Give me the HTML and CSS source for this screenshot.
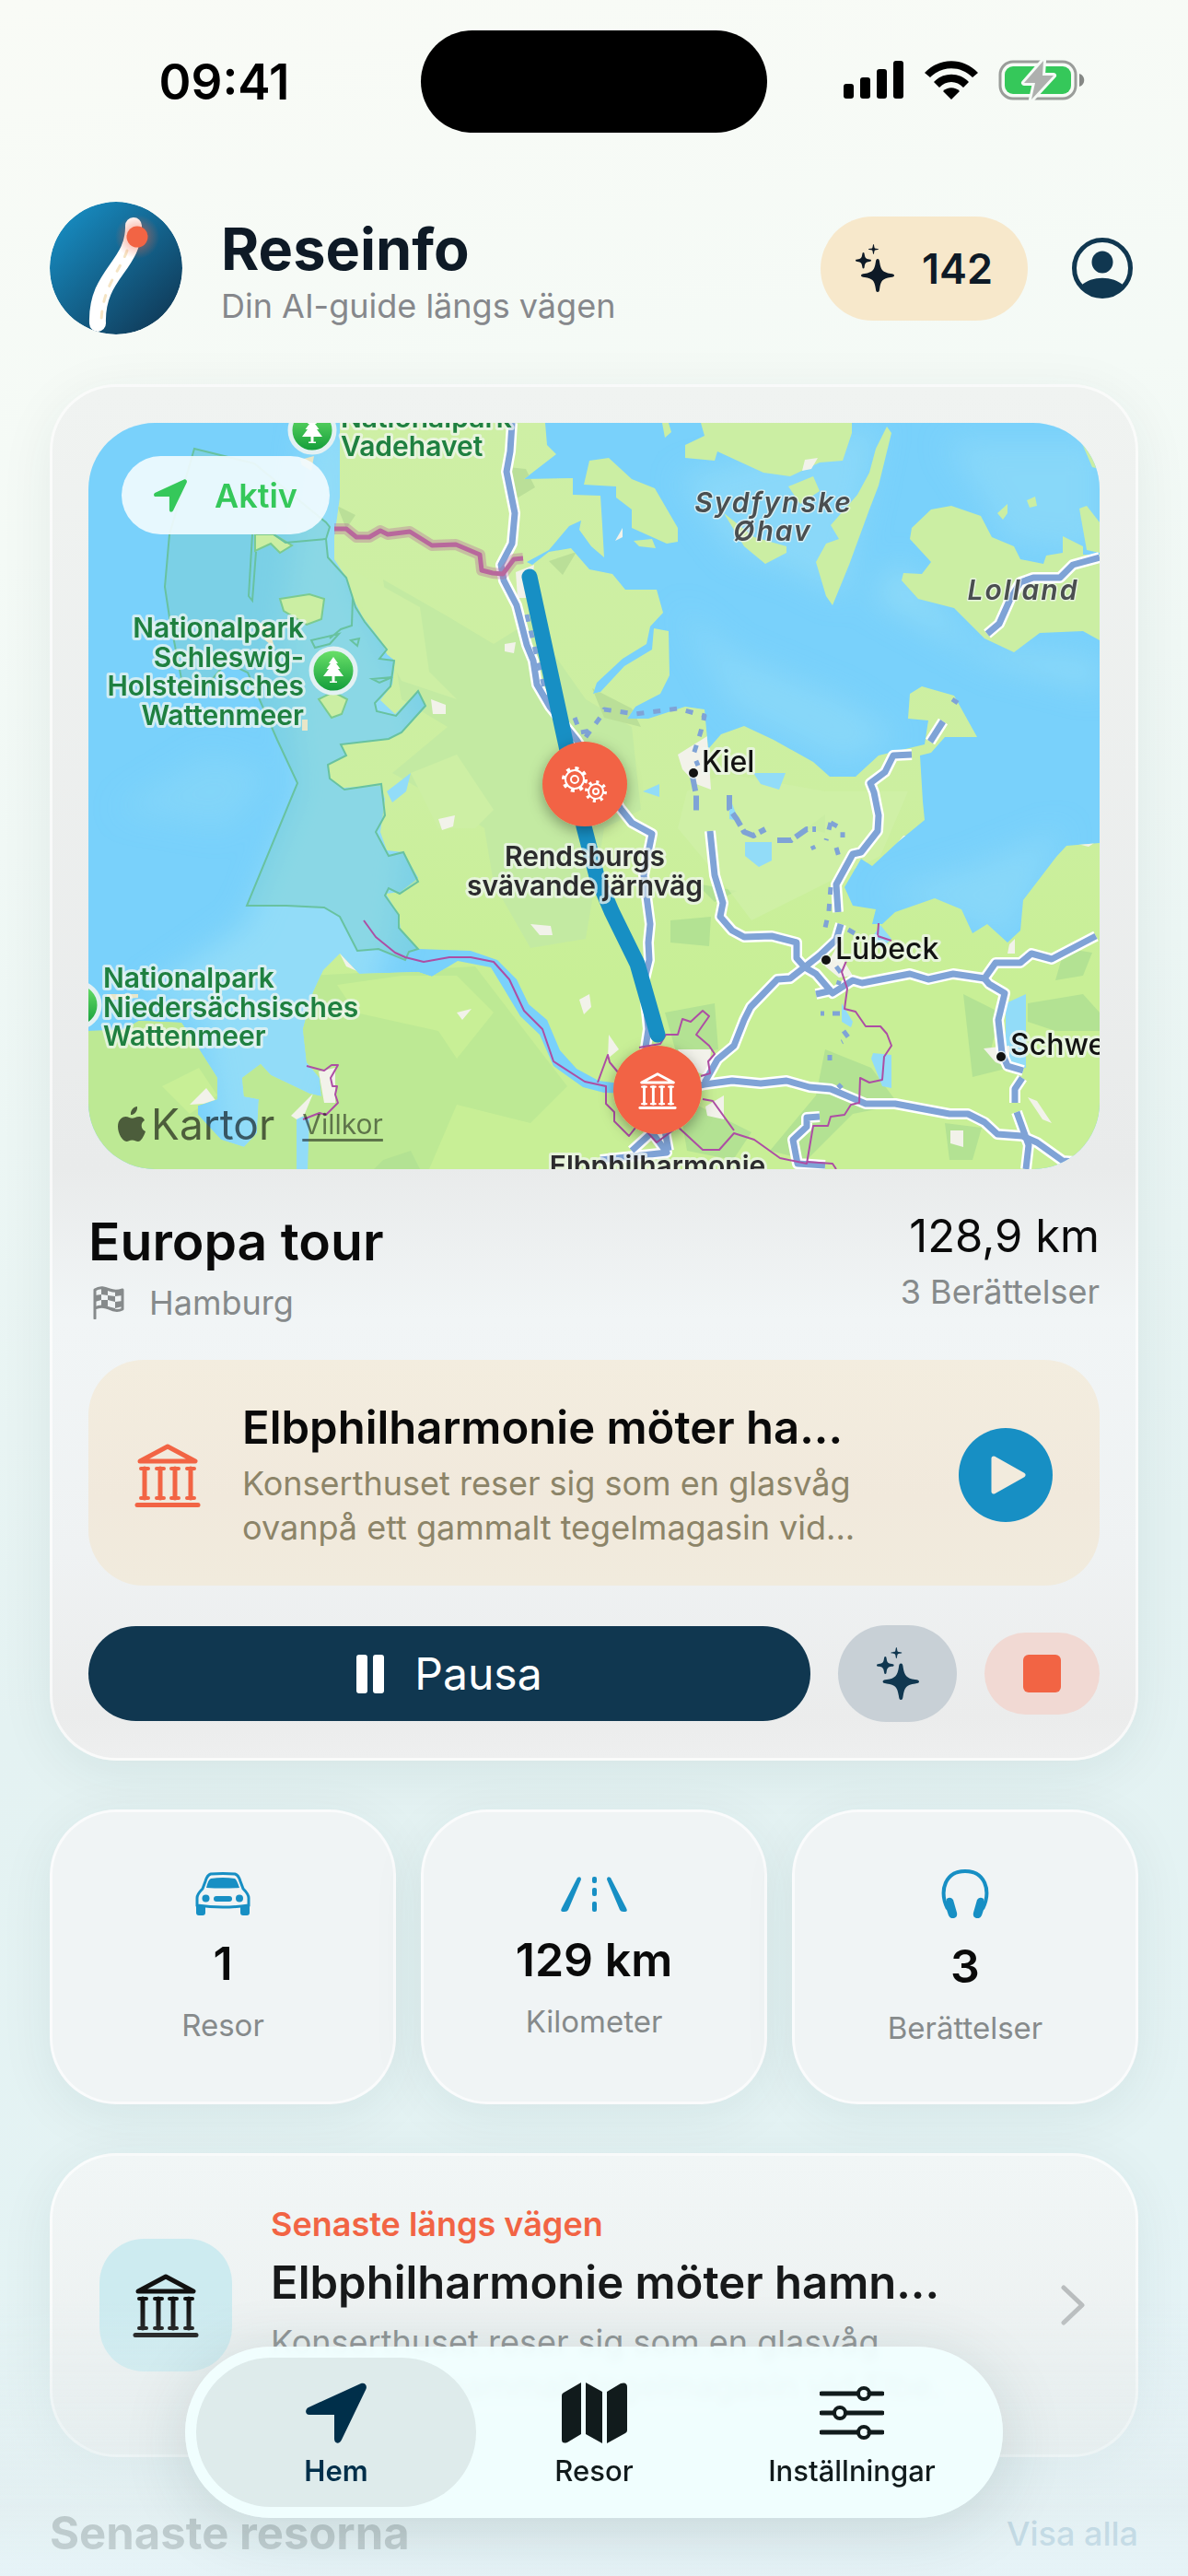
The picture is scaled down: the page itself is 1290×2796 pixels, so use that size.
FILE: index.html
```html
<!DOCTYPE html>
<html lang="sv">

	<head>
		<meta charset="UTF-8">
		<meta name="viewport" content="width=device-width, initial-scale=1">
		<title>Reseinfo</title>
		<link rel="stylesheet" href="styles.css">
	</head>

	<body>
		<!-- shared icons -->
		<svg class="sprite" width="0" height="0" aria-hidden="true">
			<symbol id="i-bank" viewBox="0 0 72 69">
				<path d="M36 3 L66 19 H6 Z" fill="none" stroke="currentColor" stroke-width="5" stroke-linejoin="round" />
				<g stroke="currentColor" stroke-linecap="round">
					<path d="M11 27V59M28 27V59M44 27V59M61 27V59" stroke-width="5" />
					<path d="M7 27h8M24 27h8M40 27h8M57 27h8M7 59h8M24 59h8M40 59h8M57 59h8" stroke-width="4" />
					<path d="M3 66.500H69" stroke-width="5" />
				</g>
			</symbol>
			<symbol id="i-sparkle" viewBox="0 0 42 52">
				<path d="M24 16c1.500 0 1.800 1 2.200 4 1.300 8 3.300 10.500 11.800 12 3 .4 4 .9 4 2s-1 1.600-4 2c-8.500 1.300-10.500 3.500-11.800 12-.4 3-.7 4-2.200 4s-1.800-1-2.200-4c-1.300-8.500-3.300-10.700-11.800-12-3-.4-4-.9-4-2s1-1.600 4-2c8.500-1.500 10.500-4 11.800-12 .4-3 .7-4 2.200-4z" />
				<path d="M8.500 9c.9 0 1 .7 1.200 2 .6 4 1.300 4.900 5.300 5.500 1.300.2 2 .4 2 1.200s-.7 1-2 1.200c-4 .6-4.700 1.600-5.300 5.500-.2 1.300-.3 2-1.200 2s-1-.7-1.200-2c-.6-3.900-1.300-4.900-5.300-5.500-1.300-.2-2-.4-2-1.200s.7-1 2-1.200c4-.6 4.700-1.500 5.300-5.500.2-1.300.3-2 1.200-2z" />
				<path d="M19.500 0c.7 0 .7 3.500 1.300 4.200.6.700 4.200.6 4.200 1.300s-3.600.6-4.200 1.300c-.6.700-.6 4.200-1.300 4.200s-.7-3.500-1.300-4.200c-.6-.7-4.200-.6-4.200-1.300s3.600-.6 4.200-1.300c.6-.7.6-4.200 1.300-4.200z" />
			</symbol>
			<symbol id="i-arrow" viewBox="0 0 66 66">
				<path d="M60 1c4-1.500 7 2 5.500 6L39 62c-2 5-8 5-8-1V35H4c-5 0-5-6-1-8z" />
			</symbol>
			<symbol id="i-tree" viewBox="0 0 22 28">
				<path d="M11 0l5 7h-2l4.500 6H16l6 8h-9.500v5.500H15V28H7v-1.500h2.500V21H0l6-8H3.500L8 7H6z" />
			</symbol>
		</svg>

		<div class="statusbar">
			<div class="time">09:41</div>
			<div class="island"></div>
			<div class="status-icons">
				<svg width="66" height="42" viewBox="0 0 66 42">
					<rect x="0" y="25" width="11" height="16" rx="3" />
					<rect x="18" y="18" width="11" height="23" rx="3" />
					<rect x="36" y="9" width="11" height="32" rx="3" />
					<rect x="54" y="0" width="11" height="41" rx="3" />
				</svg>
				<svg width="58" height="42" viewBox="0 0 58 42">
					<path d="M0 13C16-4 42-4 58 13L52 18C39 5 19 5 6 18z" />
					<path d="M10 23C20 12 38 12 48 23L42 29C35 21 23 21 16 29z" />
					<path d="M20 33C25 28 33 28 38 33L29 42z" />
				</svg>
				<svg width="94" height="46" viewBox="0 0 94 46">
					<rect x="2" y="3" width="82" height="40" rx="14" fill="none" stroke="#9a9d9a" stroke-width="3" />
					<rect x="7" y="8" width="72" height="30" rx="9" fill="#35c85a" />
					<path d="M88 16c7 2 7 12 0 14z" fill="#858885" />
					<path d="M49 2L28 26h12l-4 18 24-26H48z" fill="#aeb0ae" stroke="#f5faf6" stroke-width="6" stroke-linejoin="round" paint-order="stroke" />
				</svg>
			</div>
		</div>

		<header class="header">
			<svg class="logo" viewBox="0 0 144 144">
				<defs>
					<linearGradient id="logoBg" x1="0.1" y1="0.1" x2="0.85" y2="0.9">
						<stop offset="0" stop-color="#178bc0" />
						<stop offset="1" stop-color="#103d5c" />
					</linearGradient>
					<radialGradient id="glow">
						<stop offset="0.3" stop-color="#f26444" stop-opacity="0.45" />
						<stop offset="1" stop-color="#f26444" stop-opacity="0" />
					</radialGradient>
				</defs>
				<circle cx="72" cy="72" r="72" fill="url(#logoBg)" />
				<path d="M91 26C92 70 50 78 52 132" fill="none" stroke="#fff" stroke-width="18" stroke-linecap="round" />
				<path d="M84 53C76 76 57 92 56 130" fill="none" stroke="#f5e4c4" stroke-width="3" stroke-linecap="round" stroke-dasharray="7 11" />
				<circle cx="95" cy="38" r="24" fill="url(#glow)" />
				<circle cx="95" cy="38" r="11.500" fill="#f26444" />
			</svg>
			<div class="brand">
				<h1>Reseinfo</h1>
				<p>Din AI-guide längs vägen</p>
			</div>
			<button class="credits" type="button">
				<svg width="42" height="52"><use href="#i-sparkle" /></svg>
				142
			</button>
			<button class="profile" type="button" aria-label="Profil">
				<svg viewBox="0 0 66 66">
					<circle cx="33" cy="33" r="30.500" fill="none" stroke="#103750" stroke-width="5" />
					<ellipse cx="33" cy="26.500" rx="11.500" ry="12" />
					<path d="M10 52C21 41 45 41 56 52C44 69 22 69 10 52z" />
				</svg>
			</button>
		</header>

		<main class="content">
			<section class="card tour">
				<div class="map">
					<svg class="map-canvas" viewBox="0 0 1098 810" preserveAspectRatio="xMidYMid slice">
						<defs>
							<filter id="soft" x="-30%" y="-30%" width="160%" height="160%"><feGaussianBlur stdDeviation="16" /></filter>
							<filter id="pinShadow" x="-40%" y="-40%" width="180%" height="180%"><feDropShadow dx="0" dy="5" stdDeviation="8" flood-opacity="0.35" /></filter>
							<linearGradient id="land" x1="0" y1="0" x2="0" y2="1">
								<stop offset="0" stop-color="#ceefa5" />
								<stop offset="0.5" stop-color="#ccefa0" />
								<stop offset="0.75" stop-color="#c8ef96" />
							</linearGradient>
							<linearGradient id="park" x1="0" y1="0" x2="0" y2="1">
								<stop offset="0" stop-color="#6ee36b" />
								<stop offset="1" stop-color="#0f9a38" />
							</linearGradient>
							<clipPath id="mainClip"><use href="#mainland" /></clipPath>
						</defs>

						<!-- sea -->
						<rect width="1098" height="810" fill="#79d1fb" />
						<g fill="#92dcf8" filter="url(#soft)">
							<path d="M240 0H290V180L360 330L330 560L240 810H150L120 640L60 620L170 545L230 400L210 230z" />
							<path d="M640 60L860 0L820 190L760 160L700 140z" opacity=".7" />
							<path d="M880 150L960 240L1098 260V290L980 260L850 190z" opacity=".8" />
							<path d="M640 200L700 310L820 370L880 340L820 300L700 250z" opacity=".6" />
							<path d="M930 20H1098V140L1000 130z" opacity=".6" />
							<path d="M860 510L1000 560L1060 440L960 480z" opacity=".6" />
							<path d="M30 420L130 360L200 380L150 440z" opacity=".4" />
						</g>

						<!-- land -->
						<path id="mainland" fill="url(#land)" d="M273 0L273 81L267 124L267 148L280 168L289 194L298 211L319 238L324 251L333 258L330 284L317 301L333 316L358 291L367 308L340 336L326 343L274 349L280 361L260 371L262 386L276 396L317 394L322 408L317 444L324 464L342 466L358 494L339 509L323 511L337 534L339 551L358 571L415 573L444 583L465 604L478 631L498 648L512 681L530 701L554 714L600 720L600 728L560 727L537 721L505 698L490 664L469 644L451 614L437 591L401 584L373 601L358 596L294 598L273 576L255 594L244 618L233 658L237 694L251 711L253 731L240 728L198 708L187 696L167 711L169 731L185 734L183 771L169 786L144 778L119 751L119 741L140 734L140 711L119 678L101 651L55 649L37 659L0 660V810H1098V456L1062 459L1051 471L1015 518L1012 551L998 564L976 544L960 554L948 528L919 516L876 531L862 544L851 544L855 528L830 524L821 504L839 473L851 481L880 454L908 431L906 411L903 361L915 358L930 341L965 341L940 296L905 286L892 294L890 321L912 323L908 349L887 354L858 361L833 384L805 384L787 368L744 344L712 329L687 338L673 354L669 311L648 308L608 321L585 321L594 308L621 294L631 274L630 226L614 223L612 246L582 264L556 292L548 294L552 282L580 256L606 240L610 221L624 206L617 181L583 181L569 164L544 159L524 136L500 140L482 154L476 151L500 138L522 112L535 106L533 116L546 134L560 146L558 111L556 79L526 78L526 60L473 61L508 34L498 24L496 0z" />
						<g fill="#cbeea3">
							<path d="M544 41L565 38L590 61L615 71L640 114L640 129L628 131L590 114L590 94L573 81L573 69L538 67z" />
							<path d="M665 0L669 14L648 24V38L680 41L683 31L733 54L762 58L794 43L819 41L829 11V0z" />
							<path d="M867 4L872 11L858 68L848 94L826 154L808 198L801 188L790 151L801 131L815 126L806 111L835 78L848 54L855 28z" />
							<path d="M690 98L723 124L758 134V141L735 153L712 134z" />
							<path d="M760 69L787 58L794 74L773 88z" />
							<path d="M894 114L915 94L937 90L969 101L981 124L1005 134L1012 148L1037 153L1040 144L1058 141V123L1080 134V143H1098V236L1080 226L1033 228L1005 249L973 234L940 201L901 191L883 171L885 163L905 164L915 151L892 126z" />
							<path d="M1076 93L1084 90L1098 108V141L1084 138z" />
							<path d="M1078 20L1098 38V50L1090 48zM1019 84L1028 80L1030 90L1022 92zM987 98L998 88V98L993 105zM623 0H630L633 10L626 16z" />
							<path d="M592 128L612 126L616 136L598 134z" />
						</g>

						<!-- woods and fields -->
						<g clip-path="url(#mainClip)">
							<path fill="#bde994" d="M0 640L240 600L420 590L520 720L480 760L400 740L370 810H0z" />
							<path fill="#c8ef96" d="M80 720L120 700L140 730L110 750zM270 610L340 600L400 600L440 640L400 690L380 660L290 640z" />
							<path fill="#c3eaa2" d="M320 170L390 210L440 240L480 215L540 300L590 330L600 420L560 440L540 560L480 570L440 500L430 440L400 420L330 380L390 330L340 300L330 240z" />
							<path fill="#cdefa4" d="M270 150L360 200L370 270L400 300L340 280zM350 380L400 360L440 420L420 440L380 440z" />
							<path fill="#b3e293" d="M632 540L676 536L674 568L632 564zM626 640L680 630L684 680L640 690zM640 730L720 770L700 800L650 790zM800 680L850 700L880 740L830 750L780 800L740 790L790 730zM950 620L990 640L980 680L1000 700L960 710zM1020 630L1080 620L1098 640V660L1050 660L1020 650zM1060 570L1090 575L1080 600L1050 605zM660 500L704 508L680 520zM780 440L800 425L800 445zM930 760L970 765L960 800H935zM508 680L530 700L520 690zM320 800L350 790L360 810H310z" />
							<path fill="#badf98" d="M455 48L475 50L485 70L465 82zM270 90L290 100L280 115zM500 150L530 140L515 165zM547 288L590 310L600 330L560 320z" />
							<path fill="#d0f0a8" d="M690 380L800 400L890 400L860 470L800 500L720 540L690 500L640 440L650 400z" opacity=".8" />
							<path fill="#92dcf8" d="M713 455H742V475L728 482L713 470zM722 380H757L750 398L730 392zM852 684L872 686L872 722L862 720L850 690zM996 630L1018 620V700H996V660zM602 400L620 392L620 406zM818 630L830 650L828 656L818 650zM226 751L240 755L238 810H226zM324 400L350 380L345 400L330 412zM696 405L706 432L696 430zM860 545L872 560L862 570L850 560z" />
							<path fill="#f2f2ea" d="M640 360L672 340L676 398L660 392L645 376zM594 308H606L590 321zM464 162L484 154L480 190H466zM452 240L464 238L462 250L452 248zM372 300L388 306V316H374zM380 430L398 426L396 438L384 442zM480 544L502 546L504 556L490 556zM533 626L544 620L546 634L538 642zM400 640L416 636L406 648zM273 576L290 582L294 596L280 590zM110 740L128 722L140 738zM250 704L268 700L268 738H256zM220 752L244 728L234 752L226 756zM800 590L812 570L830 600L815 602zM640 680L676 680L674 710L650 700zM565 664L576 680L564 690zM670 742L690 730L690 756L672 752zM936 768H950V786L936 782zM1000 566L1006 560V576H998zM972 679L1000 676V700L985 694zM1020 732L1030 736L1046 760L1036 756zM1070 456H1092L1086 460zM875 460L885 448L900 448L876 464z" />
							<path fill="#c8ef96" d="M986 530L1000 516L1014 512L1006 540L990 536z" />
						</g>
						<path fill="#f2f2ea" d="M778 40L792 38L785 50L775 52zM572 128L580 114V124z" />

						<!-- national park -->
						<path fill="#7ecfc4" fill-opacity=".38" stroke="#68c2a0" stroke-width="2" d="M115 28L180 44L258 108L262 113L258 126L260 146L280 168L287 190L290 200L300 216L324 246L316 256L332 258L328 286L311 304L313 313L334 318L358 291L366 307L340 336L326 343L274 349L280 361L260 371L262 386L278 398L318 392L322 426L312 444L326 470L342 466L358 498L338 511L326 505L322 513L337 534V548L358 571L348 574L344 583L315 571L292 573L273 536L256 526L215 524H172L227 391L205 344L173 271L150 260L126 288L101 278L88 211L83 178L88 121z" />
						<g fill="#cbeea3" stroke="#7ccb8f" stroke-width="2">
							<path d="M208 191L240 186L256 191L253 213L237 219L212 204z" />
							<path d="M181 121H201L221 133L208 141L198 131L181 139z" />
							<path d="M250 300L266 292L281 300L275 316L264 320z" />
						</g>
						<path fill="none" stroke="#68c2a0" stroke-width="2" d="M178 121L174 188L178 193L182 140M201 121L214 130L258 126M242 236L272 229L262 240L246 244zM287 190L286 220L274 224L262 234M308 278L330 276L316 282zM285 236L294 234L292 242z" />
						<path fill="#e9e6c8" d="M184 216L196 222L202 244L192 236zM230 40L245 36L242 52L232 46zM232 322H238V334H232zM20 620H54V624L20 627z" />

						<!-- roads -->
						<g fill="none" stroke-linejoin="round">
							<g stroke="#fff" stroke-width="12">
								<path d="M460 0L458 31L454 53L463 98L460 131L448 154L451 171L465 198L476 241L483 258L487 284L501 308L530 344L578 419L590 434L612 446L603 491L610 544L608 564L609 583L603 608L608 658L605 678L618 724L630 790" />
								<path d="M675 443L680 491L689 521L686 536L699 551L712 558L742 557L769 564V581L778 591L790 598L808 619L830 605L840 608L892 598L912 604L939 598L973 603L985 586H1012L1024 576L1046 582L1094 557" />
								<path d="M669 716L683 691L701 676L712 648L719 634L748 604L762 603L794 578L812 561L817 544M790 620L808 616M814 531L812 501L830 468L839 466L857 443L858 426L853 401L849 391L865 379L874 361L894 360M914 346L928 324" />
								<path d="M640 724L669 718L699 714L730 717L758 714L783 721L806 723L844 739L876 739L935 750H955L973 759L987 772L1014 774L1030 781L1058 801L1072 802" />
								<path d="M973 603L978 609L995 619L988 648L992 684L998 698L1015 703M1014 711L1006 723V738M1008 748L1021 784L1018 810" />
								<path d="M976 229L989 218L1001 191L1012 173L1026 168H1055L1069 154L1098 146" />
								<path d="M794 753L780 754V764L765 778L770 804L800 806M590 790L612 770L628 792L556 800" />
							</g>
							<g stroke="#7fa3d6" stroke-width="7">
								<path d="M460 0L458 31L454 53L463 98L460 131L448 154L451 171L465 198L476 241L483 258L487 284L501 308L530 344L578 419L590 434L612 446L603 491L610 544L608 564L609 583L603 608L608 658L605 678L618 724L630 790" />
								<path d="M675 443L680 491L689 521L686 536L699 551L712 558L742 557L769 564V581L778 591L790 598L808 619L830 605L840 608L892 598L912 604L939 598L973 603L985 586H1012L1024 576L1046 582L1094 557" />
								<path d="M669 716L683 691L701 676L712 648L719 634L748 604L762 603L794 578L812 561L817 544M790 620L808 616M814 531L812 501L830 468L839 466L857 443L858 426L853 401L849 391L865 379L874 361L894 360M914 346L928 324" />
								<path d="M640 724L669 718L699 714L730 717L758 714L783 721L806 723L844 739L876 739L935 750H955L973 759L987 772L1014 774L1030 781L1058 801L1072 802" />
								<path d="M973 603L978 609L995 619L988 648L992 684L998 698L1015 703M1014 711L1006 723V738M1008 748L1021 784L1018 810" />
								<path d="M976 229L989 218L1001 191L1012 173L1026 168H1055L1069 154L1098 146" />
								<path d="M794 753L780 754V764L765 778L770 804L800 806M590 790L612 770L628 792L556 800" />
							</g>
							<g stroke="#7fa3d6" stroke-width="5" stroke-dasharray="8 10">
								<path d="M476 208L486 250L498 300M528 320L534 336L545 334M540 341L557 318L560 311L594 316L640 310L669 318L665 335L657 360L662 372" />
								<path d="M806 434L801 453M806 434L819 441V450M812 461L815 471M786 459L788 463M806 504L804 530L800 548M825 550L832 554M812 590L818 598L814 610M795 641H799M808 641H818M820 660L826 668L818 672M805 686V692M814 718L818 722M938 300L944 304" />
							</g>
							<path stroke="#7fa3d6" stroke-width="6" stroke-dasharray="16 5" d="M656 384L660 404V422M696 404V419L704 430L712 444L722 448L735 441M748 453H763L780 441L790 441" />
						</g>

						<!-- borders -->
						<g fill="none" stroke-linejoin="round">
							<path stroke="#b8689c" stroke-opacity=".35" stroke-width="12" d="M267 115H280L291 124H305L317 117L325 121L349 118L373 133L399 132L425 143L427 160L439 163L450 164L462 148L472 147" />
							<path stroke="#b8689c" stroke-width="5" d="M267 115H280L291 124H305L317 117L325 121L349 118L373 133L399 132L425 143L427 160L439 163L450 164L462 148L472 147" />
							<path stroke="#ad4ea4" stroke-width="2" d="M299 540L312 558L333 575L344 580L364 585L392 580H415L440 585L457 604L473 638L493 658L505 693L539 715L562 720V739L571 748V758L587 774L598 760L617 781L640 764L667 789H685L701 771L723 778L751 798L780 804L787 763H803L806 753L821 751L828 740L837 738L838 711L848 716L862 713L864 688L872 676L867 663L860 655H844L833 639L821 636L824 614L818 596L823 584" />
							<path stroke="#ad4ea4" stroke-width="2" d="M553 716L564 686L566 694L576 706M598 678L621 674L627 664H640L645 647L654 650L667 638L674 644L660 664L674 676L680 685L673 693L675 706L665 709M667 734L678 736L701 768M780 802L808 804L812 810M858 543L857 557L872 562M237 698L256 703L264 697H271L263 711L265 720H270L268 729L271 738L258 751L251 749L233 756" />
						</g>

						<!-- travelled route -->
						<path fill="none" stroke="#178fc4" stroke-width="17" stroke-linecap="round" stroke-linejoin="round" d="M479 167L521 360L538 438L552 492L568 530L596 587L618 664" />

						<!-- place names -->
						<g class="label label-park">
							<text x="274" y="5">Nationalpark</text>
							<text x="274" y="36">Vadehavet</text>
						</g>
						<g class="label label-park" text-anchor="end">
							<text x="234" y="233">Nationalpark</text>
							<text x="234" y="265">Schleswig-</text>
							<text x="234" y="296">Holsteinisches</text>
							<text x="234" y="328">Wattenmeer</text>
						</g>
						<g class="label label-park">
							<text x="16" y="613">Nationalpark</text>
							<text x="16" y="645">Niedersächsisches</text>
							<text x="16" y="676">Wattenmeer</text>
						</g>
						<g class="label label-region" text-anchor="middle">
							<text x="744" y="97">Sydfynske</text>
							<text x="743" y="128">Øhav</text>
							<text x="1015" y="192">Lolland</text>
						</g>
						<g class="label label-city">
							<circle cx="657" cy="380" r="5" />
							<text x="666" y="379">Kiel</text>
							<circle cx="801" cy="583" r="5" />
							<text x="811" y="582">Lübeck</text>
							<circle cx="991" cy="688" r="5" />
							<text x="1001" y="686">Schwerin</text>
						</g>
						<g class="label label-stop" text-anchor="middle">
							<text x="539" y="481">Rendsburgs</text>
							<text x="539" y="513">svävande järnväg</text>
							<text x="618" y="817">Elbphilharmonie</text>
						</g>

						<!-- park markers -->
						<g stroke="#e3f1f3" stroke-width="5" fill="url(#park)">
							<circle cx="243" cy="8" r="24" />
							<circle cx="266" cy="269" r="24" />
							<circle cx="-12" cy="632" r="24" />
						</g>
						<use href="#i-tree" x="232" y="-6" width="22" height="28" fill="#fff" />
						<use href="#i-tree" x="255" y="254" width="22" height="28" fill="#fff" />

						<!-- story pins -->
						<g filter="url(#pinShadow)" fill="#f26444">
							<circle cx="539" cy="392" r="46" />
							<circle cx="618" cy="724" r="48" />
						</g>
						<g fill="none" stroke="#fff">
							<circle cx="528" cy="387" r="10" stroke-width="2" />
							<circle cx="528" cy="387" r="4" stroke-width="2" />
							<circle cx="528" cy="387" r="12" stroke-width="4" stroke-dasharray="4 5.420" />
							<circle cx="551" cy="400" r="8" stroke-width="2" />
							<circle cx="551" cy="400" r="3" stroke-width="2" />
							<circle cx="551" cy="400" r="10" stroke-width="4" stroke-dasharray="3 4.850" />
						</g>
						<use href="#i-bank" x="597" y="705" width="42" height="40" color="#fff" />
					</svg>
					<span class="badge">
						<svg width="36" height="36"><use href="#i-arrow" /></svg>
						Aktiv
					</span>
					<div class="attribution">
						<svg width="30" height="39" viewBox="0 0 30 39">
							<path d="M21 0c.5 5-3 9-7 9-.5-5 3-8.500 7-9zM29 15c-5 3-4 10 1 12-2 6-5 11-8 11-2.500 0-3.500-1.500-6.500-1.500S11.500 38 9.500 38C5 38 0 29 0 22 0 15 4 11 8.500 11c3 0 5 1.800 7 1.800s4.500-2 8-1.800c2.500.1 4.500 1.500 5.500 4z" />
						</svg>
						<span>Kartor</span>
						<a href="#">Villkor</a>
					</div>
				</div>

				<div class="tour-info">
					<div>
						<h2>Europa tour</h2>
						<p class="muted destination">
							<svg width="34" height="36" viewBox="0 0 34 36">
								<path d="M2 35V4C8 0 13 2 18 4s8 2 14 0v21c-6 3-11 1-15-1S8 21 2 24" fill="none" stroke="currentColor" stroke-width="3" stroke-linecap="round" stroke-linejoin="round" />
								<path d="M9 2l7 2v6l-7-1zM24 5l8-1v6l-8 1zM2 10l7-1v6l-7 2zM16 10l8 1v6l-8-2zM9 15l7 0v7l-7-1zM24 17l8-1v6l-8 2zM16 22l8 2v3l-8-3z" fill="currentColor" />
							</svg>
							Hamburg
						</p>
					</div>
					<div class="tour-stats">
						<p class="distance">128,9 km</p>
						<p class="muted">3 Berättelser</p>
					</div>
				</div>

				<article class="story">
					<svg class="story-icon" width="72" height="69"><use href="#i-bank" /></svg>
					<div class="story-text">
						<h3>Elbphilharmonie möter ha...</h3>
						<p>Konserthuset reser sig som en glasvåg<br>ovanpå ett gammalt tegelmagasin vid...</p>
					</div>
					<button class="play" type="button" aria-label="Spela">
						<svg width="38" height="42" viewBox="0 0 38 42"><path d="M3 3L35 21L3 39z" fill="currentColor" stroke="currentColor" stroke-width="5" stroke-linejoin="round" /></svg>
					</button>
				</article>

				<div class="controls">
					<button class="pause" type="button">
						<svg width="30" height="42" viewBox="0 0 30 42"><rect width="12" height="42" rx="3" /><rect x="18" width="12" height="42" rx="3" /></svg>
						Pausa
					</button>
					<button class="generate" type="button" aria-label="Ny berättelse">
						<svg width="46" height="57"><use href="#i-sparkle" /></svg>
					</button>
					<button class="stop" type="button" aria-label="Stoppa">
						<span class="stop-square"></span>
					</button>
				</div>
			</section>

			<section class="stats">
				<div class="card stat">
					<svg width="60" height="47" viewBox="0 0 60 47">
						<path d="M17 2Q30 1 43 2Q47 3 49 10L52 18Q58 24 58 28V36Q30 40 2 36V28Q2 24 8 18L11 10Q13 3 17 2z" fill="none" stroke="currentColor" stroke-width="3" />
						<path d="M17 7Q30 5 43 7Q45 8 48 17Q30 18 12 17Q14 8 17 7zM1 36L11 38V44Q11 47 8 47H4Q1 47 1 44zM59 36L49 38V44Q49 47 52 47H56Q59 47 59 44z" />
						<circle cx="11.500" cy="28.500" r="4" />
						<circle cx="48" cy="28.500" r="4" />
						<rect x="20" y="26" width="20" height="6" rx="3" />
					</svg>
					<strong>1</strong>
					<span>Resor</span>
				</div>
				<div class="card stat">
					<svg width="72" height="38" viewBox="0 0 72 38">
						<path d="M18 1Q22-1 22 3L8 36Q7 38 4 38H2Q-1 38 1 34zM54 1Q50-1 50 3L64 36Q65 38 68 38H70Q73 38 71 34z" />
						<rect x="34" y="0" width="5" height="7" rx="2" />
						<rect x="34" y="12" width="5" height="9" rx="2" />
						<rect x="34" y="27" width="5" height="11" rx="2" />
					</svg>
					<strong>129 km</strong>
					<span>Kilometer</span>
				</div>
				<div class="card stat">
					<svg width="52" height="53" viewBox="0 0 52 53">
						<path d="M7 43C-3 22 5 2 26 2S55 22 45 43" fill="none" stroke="currentColor" stroke-width="4" />
						<path d="M6 32Q10 29 13 33L17 47Q18 52 14 53Q10 54 8 50L5 41zM46 32Q42 29 39 33L35 47Q34 52 38 53Q42 54 44 50L47 41z" />
					</svg>
					<strong>3</strong>
					<span>Berättelser</span>
				</div>
			</section>

			<section class="card latest">
				<div class="latest-icon"><svg width="72" height="69"><use href="#i-bank" /></svg></div>
				<div class="latest-text">
					<p class="eyebrow">Senaste längs vägen</p>
					<h3>Elbphilharmonie möter hamn...</h3>
					<p class="muted">Konserthuset reser sig som en glasvåg<br>ovanpå ett gammalt tegelmagasin vid Elbe.</p>
				</div>
				<svg class="chevron" width="27" height="44" viewBox="0 0 27 44"><path d="M3 3L23 22L3 41" fill="none" stroke="currentColor" stroke-width="5" stroke-linecap="round" stroke-linejoin="round" /></svg>
			</section>

			<div class="section-head">
				<h2>Senaste resorna</h2>
				<a href="#">Visa alla</a>
			</div>
		</main>

		<div class="fade"></div>
		<nav class="tabbar">
			<a class="tab active" href="#">
				<svg width="66" height="66"><use href="#i-arrow" /></svg>
				Hem
			</a>
			<a class="tab" href="#">
				<svg width="71" height="66" viewBox="0 0 71 66">
					<path d="M0 14Q0 12 2 11L21 0V56L6 65Q0 67 0 62zM26 0L44 10V66L26 56zM49 10L64 1Q71-1 71 5V52Q71 54 69 55L49 66z" />
				</svg>
				Resor
			</a>
			<a class="tab" href="#">
				<svg width="70" height="66" viewBox="0 0 70 66">
					<path d="M2 12H41M54 12H68M2 33H15M29 33H68M2 54H41M54 54H68" fill="none" stroke="currentColor" stroke-width="5" stroke-linecap="round" />
					<g fill="none" stroke="currentColor" stroke-width="4">
						<circle cx="48" cy="12" r="6" />
						<circle cx="22" cy="33" r="6" />
						<circle cx="48" cy="54" r="6" />
					</g>
				</svg>
				Inställningar
			</a>
		</nav>
	</body>

</html>
```
FILE: styles.css
```css
* {
	margin: 0;
	padding: 0;
	box-sizing: border-box;
}

body {
	min-height: 100vh;
	font-family: Inter, "Liberation Sans", sans-serif;
	font-size: 36px;
	line-height: 48px;
	color: #0a0a0a;
	background: linear-gradient(170deg, #f9fbf6 0%, #f4faf6 20%, #e4f2f2 62%, #e4f3f4 85%, #e7f4fa 100%);
}

button {
	border: 0;
	font-family: inherit;
	cursor: pointer;
	display: flex;
	align-items: center;
	justify-content: center;
}

a {
	text-decoration: none;
	color: inherit;
}

svg {
	display: block;
	flex: none;
	fill: currentColor;
}

.sprite {
	position: absolute;
}

.muted {
	color: #868a8b;
}

/* status bar */
.statusbar {
	display: grid;
	grid-template-columns: 1fr 376px 1fr;
	align-items: center;
	height: 177px;
	color: #000;
}

.time {
	padding-left: 30px;
	text-align: center;
	font-size: 53px;
	font-weight: 600;
}

.island {
	height: 111px;
	border-radius: 56px;
	background: #000;
}

.status-icons {
	display: flex;
	align-items: center;
	justify-content: center;
	gap: 22px;
	padding: 0 30px 4px 0;
}

/* header */
.header {
	display: flex;
	align-items: center;
	padding: 42px 60px 54px 54px;
}

.logo {
	width: 144px;
	height: 144px;
	border-radius: 50%;
	overflow: hidden;
}

.brand {
	flex: 1;
	padding: 6px 0 0 42px;
}

.brand h1 {
	font-size: 63px;
	line-height: 76px;
	color: #0e1a26;
}

.brand p {
	color: #86888c;
}

.credits {
	gap: 30px;
	height: 113px;
	padding: 0 38px;
	border-radius: 57px;
	background: #f7e8cb;
	color: #0e1a26;
	font-size: 45px;
	font-weight: 600;
}

.profile {
	margin-left: 48px;
	background: none;
	color: #103750;
}

.profile svg {
	width: 66px;
	height: 66px;
}

/* cards */
.content {
	display: flex;
	flex-direction: column;
	gap: 53px;
	padding: 0 54px;
}

.card {
	border: 3px solid rgba(255, 255, 255, .65);
	border-radius: 72px;
	background: #f0f4f5;
	box-shadow: 0 12px 60px rgba(20, 50, 50, .07);
}

.tour {
	padding: 39px;
	background: linear-gradient(#f0f3f1 0%, #e9ebeb 57%, #f1f5f6 68%, #eff2f3 85%, #ebecec 97%, #eeefef 100%);
}

.map {
	position: relative;
	aspect-ratio: 1098 / 810;
	border-radius: 72px;
	overflow: hidden;
}

.map-canvas {
	width: 100%;
	height: 100%;
}

.label {
	font-size: 30px;
	font-weight: 600;
	paint-order: stroke;
	stroke: rgba(240, 245, 240, .75);
	stroke-width: 6px;
	stroke-linejoin: round;
}

.label circle {
	stroke-width: 3px;
}

.label-park {
	fill: #1f8040;
}

.label-region {
	fill: #4a4e50;
	stroke-width: 3px;
	font-style: italic;
	letter-spacing: 2px;
}

.label-city {
	font-size: 32px;
	font-weight: 500;
	fill: #121212;
}

.label-stop {
	fill: #2c2c2e;
}

.badge {
	position: absolute;
	top: 36px;
	left: 36px;
	display: flex;
	align-items: center;
	gap: 30px;
	height: 85px;
	padding: 0 35px;
	border-radius: 43px;
	background: rgba(241, 251, 254, .92);
	color: #35c85a;
	font-weight: 600;
}

.attribution {
	position: absolute;
	left: 32px;
	bottom: 22px;
	display: flex;
	align-items: center;
	gap: 6px;
	color: rgba(0, 0, 0, .6);
	font-size: 46px;
	line-height: 54px;
}

.attribution a {
	margin-left: 24px;
	font-size: 30px;
	line-height: 36px;
	color: rgba(0, 0, 0, .5);
	text-decoration: underline;
	text-underline-offset: 5px;
}

.tour-info {
	display: flex;
	justify-content: space-between;
	margin: 43px 0 38px;
}

.tour-info h2 {
	margin-bottom: 6px;
	font-size: 57px;
	line-height: 72px;
	font-weight: 600;
}

.destination {
	display: flex;
	align-items: center;
	gap: 27px;
	padding-left: 5px;
}

.tour-stats {
	text-align: right;
}

.distance {
	margin-bottom: 6px;
	font-size: 49px;
	line-height: 60px;
}

.story {
	display: flex;
	align-items: center;
	gap: 45px;
	padding: 44px 51px 39px 50px;
	border-radius: 60px;
	background: linear-gradient(#f3eddf, #f1e9dc 60%, #f1ebdd);
}

.story-icon {
	color: #f26444;
}

.story-text {
	flex: 1;
}

.story-text h3,
.latest-text h3 {
	font-size: 49px;
	line-height: 60px;
	font-weight: 600;
}

.story-text p {
	margin-top: 6px;
	color: #8c8468;
}

.play {
	width: 102px;
	height: 102px;
	padding-left: 6px;
	border-radius: 50%;
	background: #178fc4;
	color: #f2ebdd;
}

.controls {
	display: flex;
	align-items: center;
	gap: 30px;
	margin-top: 43px;
}

.pause {
	flex: 1;
	gap: 33px;
	height: 103px;
	border-radius: 52px;
	background: #103750;
	color: #fff;
	font-size: 48px;
}

.generate {
	width: 129px;
	height: 105px;
	border-radius: 53px;
	background: #c8d0d6;
	color: #103750;
}

.stop {
	width: 125px;
	height: 89px;
	border-radius: 45px;
	background: #f1d9d3;
}

.stop-square {
	width: 41px;
	height: 41px;
	border-radius: 6px;
	background: #f26444;
}

/* statistics */
.stats {
	display: grid;
	grid-template-columns: repeat(3, 1fr);
	gap: 27px;
}

.stat {
	display: flex;
	flex-direction: column;
	align-items: center;
	justify-content: center;
	height: 320px;
	padding-top: 4px;
	color: #178fc4;
}

.stat strong {
	margin: 22px 0 15px;
	font-size: 50px;
	line-height: 60px;
	font-weight: 600;
	color: #0a0a0a;
}

.stat span {
	font-size: 33px;
	line-height: 44px;
	color: #868a8b;
}

/* latest story */
.latest {
	display: flex;
	align-items: center;
	padding: 50px 54px 50px 51px;
	background: linear-gradient(#f1f6f6, #ebefef);
}

.latest-icon {
	display: flex;
	align-items: center;
	justify-content: center;
	width: 144px;
	height: 144px;
	border-radius: 48px;
	background: #cdebf0;
	color: #111;
}

.latest-text {
	flex: 1;
	padding-left: 42px;
}

.latest-text h3 {
	margin: 10px 0;
	color: #17191a;
}

.eyebrow {
	color: #f26444;
	font-weight: 600;
}

.chevron {
	color: #b9bdbe;
}

.section-head {
	display: flex;
	align-items: center;
	justify-content: space-between;
	color: #455;
}

.section-head h2 {
	font-size: 49px;
	line-height: 60px;
}

.section-head a {
	color: #5b93b5;
	font-weight: 500;
}

/* bottom navigation */
.fade {
	position: fixed;
	left: 0;
	right: 0;
	bottom: 0;
	height: 300px;
	background: linear-gradient(rgba(228, 240, 241, 0), rgba(226, 238, 240, .75) 75%, rgba(230, 243, 247, .8));
	pointer-events: none;
}

.tabbar {
	position: fixed;
	left: 50%;
	bottom: 63px;
	transform: translateX(-50%);
	display: flex;
	padding: 12px;
	border-radius: 93px;
	background: rgba(241, 255, 255, .92);
	backdrop-filter: blur(4px);
	box-shadow: 0 12px 72px rgba(20, 60, 60, .14);
}

.tab {
	display: flex;
	flex-direction: column;
	align-items: center;
	gap: 12px;
	width: 304px;
	height: 162px;
	padding-top: 27px;
	border-radius: 81px;
	color: #111b1c;
	font-size: 31px;
	line-height: 36px;
	font-weight: 500;
}

.tab + .tab {
	margin-left: -24px;
}

.tab.active {
	background: #deebeb;
	color: #002f4a;
	font-weight: 600;
}
```
